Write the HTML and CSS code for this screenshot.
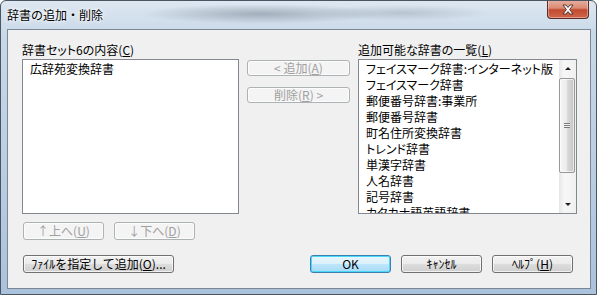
FILE: index.html
```html
<!DOCTYPE html>
<html lang="ja">
<head>
  <meta charset="UTF-8" />
  <title>辞書の追加・削除</title>
  <link rel="stylesheet" href="styles.css">
</head>
<body>

  <div class="window">
    <div class="titlebar">
      <span class="title">辞書の追加・削除</span>
      <button class="close-btn" aria-label="閉じる">
        <svg width="14" height="11" viewBox="0 0 14 11">
          <path d="M2 1 L5 1 L7 3.5 L9 1 L12 1 L8.6 5.5 L12 10 L9 10 L7 7.5 L5 10 L2 10 L5.4 5.5 Z" fill="#fff" stroke="#43302a" stroke-width="0.9" stroke-linejoin="round"/>
        </svg>
      </button>
    </div>

    <div class="client">
      <div class="lists">
        <div class="list-column left-column">
          <div class="list-label">辞書セット6の内容(<u>C</u>)</div>
          <div class="listbox">
            <div class="list-items">
              <div class="list-item">広辞苑変換辞書</div>
            </div>
          </div>
        </div>

        <div class="move-buttons">
          <button class="btn" disabled>&lt; 追加(<u>A</u>)</button>
          <button class="btn" disabled>削除(<u>R</u>) &gt;</button>
        </div>

        <div class="list-column right-column">
          <div class="list-label">追加可能な辞書の一覧(<u>L</u>)</div>
          <div class="listbox">
            <div class="list-items">
              <div class="list-item">フェイスマーク辞書:インターネット版</div>
              <div class="list-item">フェイスマーク辞書</div>
              <div class="list-item">郵便番号辞書:事業所</div>
              <div class="list-item">郵便番号辞書</div>
              <div class="list-item">町名住所変換辞書</div>
              <div class="list-item">トレンド辞書</div>
              <div class="list-item">単漢字辞書</div>
              <div class="list-item">人名辞書</div>
              <div class="list-item">記号辞書</div>
              <div class="list-item">カタカナ語英語辞書</div>
            </div>
            <div class="scrollbar">
              <div class="scroll-arrow"><span class="arrow-up"></span></div>
              <div class="scroll-track">
                <div class="scroll-thumb">
                  <span class="grip"></span>
                </div>
              </div>
              <div class="scroll-arrow"><span class="arrow-down"></span></div>
            </div>
          </div>
        </div>
      </div>

      <div class="order-row">
        <button class="btn btn-order" disabled>↑上へ(<u>U</u>)</button>
        <button class="btn btn-order" disabled>↓下へ(<u>D</u>)</button>
      </div>

      <div class="bottom-row">
        <button class="btn btn-active btn-file">ﾌｧｲﾙを指定して追加(<u>O</u>)...</button>
        <div class="dialog-buttons">
          <button class="btn btn-active btn-default">OK</button>
          <button class="btn btn-active">ｷｬﾝｾﾙ</button>
          <button class="btn btn-active">ﾍﾙﾌﾟ(<u>H</u>)</button>
        </div>
      </div>
    </div>
  </div>

</body>
</html>
```

FILE: styles.css
```css
body {
  margin: 0;
  padding: 0;
  background: #fff;
  font-family: "Noto Sans CJK JP", "Noto Sans", sans-serif;
  font-size: 12px;
  color: #000;
}

.window {
  width: 597px;
  height: 295px;
  box-sizing: border-box;
  border: 1px solid #4a5560;
  border-radius: 6px 6px 0 0;
  background:
    radial-gradient(ellipse 120px 10px at 260px 13px, rgba(120,132,146,0.55), rgba(120,132,146,0)),
    radial-gradient(ellipse 90px 8px at 400px 12px, rgba(140,150,162,0.4), rgba(140,150,162,0)),
    linear-gradient(180deg, #dde7f1 0%, #c8d8e8 12%, #b9cde2 60%, #aac2dc 100%);
  display: flex;
  flex-direction: column;
  overflow: hidden;
}

.titlebar {
  height: 28px;
  display: flex;
  justify-content: space-between;
  align-items: flex-start;
}

.title {
  margin: 6px 0 0 6px;
  line-height: 16px;
  font-size: 12px;
  text-shadow: 0 0 6px #fff, 0 0 3px #fff;
}

.close-btn {
  width: 42px;
  height: 19px;
  margin: -1px 7px 0 0;
  padding: 0;
  border: 1px solid #5c2e24;
  border-top: none;
  border-radius: 0 0 4px 4px;
  background: linear-gradient(180deg, #e8b2a2 0%, #d98a74 45%, #c24a2e 55%, #d0674c 100%);
  box-shadow: inset 0 0 0 1px rgba(255,255,255,0.35);
  display: flex;
  align-items: center;
  justify-content: center;
}

.client {
  width: 584px;
  height: 260px;
  margin-left: 6px;
  box-sizing: border-box;
  border: 1px solid #7b8794;
  background: #f0f0f0;
  padding: 12px 13px 0 14px;
}

.lists {
  display: flex;
}

.list-column {
  display: flex;
  flex-direction: column;
}

.left-column {
  width: 217px;
}

.right-column {
  width: 219px;
  margin-left: 8px;
}

.list-label {
  height: 17px;
  line-height: 15px;
  white-space: nowrap;
  font-feature-settings: "palt";
}

.listbox {
  height: 155px;
  box-sizing: border-box;
  border: 1px solid #828790;
  background: #fff;
  display: flex;
  overflow: hidden;
}

.list-items {
  flex: 1;
  padding: 1px 0 0 7px;
  overflow: hidden;
}

.list-item {
  line-height: 16px;
  white-space: nowrap;
  font-feature-settings: "palt";
}

.move-buttons {
  width: 103px;
  margin-left: 8px;
  padding-top: 18px;
  display: flex;
  flex-direction: column;
  gap: 11px;
}

.btn {
  height: 16px;
  padding: 0;
  font-family: "Noto Sans CJK JP", "Noto Sans", sans-serif;
  font-size: 12px;
  line-height: 14px;
  color: #000;
  white-space: nowrap;
  border: 1px solid #707070;
  border-radius: 3px;
  background: linear-gradient(180deg, #f2f2f2 0%, #ebebeb 49%, #dddddd 51%, #cfcfcf 100%);
  box-shadow: inset 0 0 0 1px rgba(255,255,255,0.7);
}

.btn:disabled {
  color: #a0a0a0;
  border-color: #adb2b5;
  background: #f4f4f4;
  box-shadow: inset 0 0 0 1px #fcfcfc;
}

.scrollbar {
  width: 17px;
  display: flex;
  flex-direction: column;
  background: linear-gradient(90deg, #e6e6e6, #f7f7f7 30%, #f0f0f0);
}

.scroll-arrow {
  height: 17px;
  display: flex;
  align-items: center;
  justify-content: center;
}

.arrow-up {
  width: 0;
  height: 0;
  border-left: 3px solid transparent;
  border-right: 3px solid transparent;
  border-bottom: 3px solid #222;
}

.arrow-down {
  width: 0;
  height: 0;
  border-left: 3px solid transparent;
  border-right: 3px solid transparent;
  border-top: 3px solid #222;
}

.scroll-track {
  flex: 1;
}

.scroll-thumb {
  height: 95px;
  margin: 1px 1px 0 0;
  box-sizing: border-box;
  border: 1px solid #989898;
  border-radius: 2px;
  background: linear-gradient(90deg, #f6f6f6 0%, #ececec 45%, #d8d8d8 55%, #c6c6c6 100%);
  box-shadow: inset 0 0 0 1px rgba(255,255,255,0.6);
  display: flex;
  align-items: center;
  justify-content: center;
}

.grip {
  width: 6px;
  height: 5px;
  background: repeating-linear-gradient(180deg, #7a7a7a 0, #7a7a7a 1px, #f4f4f4 1px, #f4f4f4 2px);
}

.order-row {
  margin: 8px 0 0 1px;
  height: 18px;
  display: flex;
  gap: 10px;
}

.btn-order {
  width: 81px;
  height: 18px;
}

.bottom-row {
  margin: 15px 0 0 1px;
  display: flex;
  justify-content: space-between;
}

.btn-active {
  width: 81px;
  height: 18px;
}

.btn-file {
  width: 151px;
}

.dialog-buttons {
  display: flex;
  gap: 10px;
  margin-right: 4px;
}

.btn-default {
  border-color: #3c7fb1;
  background: linear-gradient(180deg, #eaf6fd 0%, #d9f0fc 49%, #bee6fd 51%, #a7d9f5 100%);
  box-shadow: inset 0 0 0 1px #48d8fb;
}
```
